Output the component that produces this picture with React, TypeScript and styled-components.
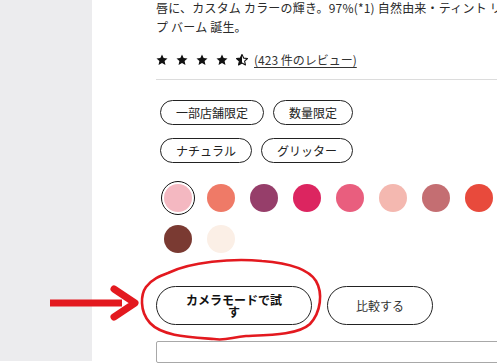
import React from "react";
import styled, { createGlobalStyle } from "styled-components";

const GlobalStyle = createGlobalStyle`
  html, body {
    margin: 0;
    padding: 0;
    background: #fff;
    overflow: hidden;
  }
  body {
    font-family: "Noto Sans CJK JP", "Noto Sans", sans-serif;
    color: #222;
  }
  * { box-sizing: border-box; }
`;

const swatches = [
  "#f4b8c1", "#ef7a67", "#963e6a", "#dc2560",
  "#e95e7e", "#f4b8b0", "#c46e72", "#e84a3c",
  "#7a3a32", "#fbefe6",
];

// star outline used for the rating row
const STAR = "M12 1l3.3 7.2 7.7.8-5.8 5.2 1.7 7.7L12 18l-6.9 3.9 1.7-7.7L1 9l7.7-.8z";

function Star({ half }: { half?: boolean }) {
  return (
    <svg width="12" height="12" viewBox="0 0 24 24">
      {half ? (
        <>
          <defs>
            <clipPath id="leftHalf">
              <rect x="0" y="0" width="12" height="24" />
            </clipPath>
          </defs>
          <path d={STAR} fill="none" stroke="#111" strokeWidth="2.2" strokeLinejoin="round" />
          <path d={STAR} fill="#111" clipPath="url(#leftHalf)" />
        </>
      ) : (
        <path d={STAR} fill="#111" />
      )}
    </svg>
  );
}

export default function App() {
  return (
    <Page>
      <GlobalStyle />
      <Sidebar />
      <Main>
        <Description>
          <span>唇に、カスタム カラーの輝き。97%(*1) 自然由来・ティント リ</span>
          <span>プ バーム 誕生。</span>
        </Description>

        <Rating>
          <Stars>
            <Star />
            <Star />
            <Star />
            <Star />
            <Star half />
          </Stars>
          <ReviewLink href="#">(423 件のレビュー)</ReviewLink>
        </Rating>

        <Divider />

        <TagRow>
          <Tag>一部店舗限定</Tag>
          <Tag>数量限定</Tag>
        </TagRow>
        <TagRow>
          <Tag>ナチュラル</Tag>
          <Tag>グリッター</Tag>
        </TagRow>

        <SwatchGrid>
          {swatches.map((c, i) => (
            <Swatch key={c} $selected={i === 0}>
              <SwatchDot $color={c} />
            </Swatch>
          ))}
        </SwatchGrid>

        <Actions>
          <PillButton $primary>カメラモードで試す</PillButton>
          <PillButton>比較する</PillButton>
        </Actions>

        <FormBox />
      </Main>

      <Annotation viewBox="0 0 497 363" width="497" height="363">
        <g fill="none" stroke="#e3191f" strokeLinecap="round" strokeLinejoin="round">
          <path d="M50 303 L122 303" strokeWidth="7" strokeLinecap="butt" />
          <path d="M114 289 L135 303 L114 317" strokeWidth="7" />
          <path
            d="M168 273 C190 262 232 258 262 261 C288 263 308 268 316 281 C323 293 321 312 310 324 C298 335 270 335 246 336 C232 337 226 341 214 339 C188 337 162 336 150 323 C139 311 141 294 146 287 C152 279 160 276 168 273 Z"
            strokeWidth="2.6"
          />
        </g>
      </Annotation>
    </Page>
  );
}

const Page = styled.div`
  position: relative;
  display: flex;
  width: 497px;
  height: 363px;
  overflow: hidden;
`;

const Sidebar = styled.div`
  flex-shrink: 0;
  width: 92px;
  height: 361px;
  background: #ececee;
`;

const Main = styled.div`
  flex-shrink: 0;
  width: 420px;
  padding-left: 64px;
  display: flex;
  flex-direction: column;
`;

const Description = styled.p`
  margin: -2px 0 0;
  font-size: 12px;
  line-height: 19px;
  letter-spacing: 0.2px;
  color: #2a2a2a;

  span {
    display: block;
    white-space: nowrap;
  }
`;

const Rating = styled.div`
  display: flex;
  align-items: center;
  height: 20px;
  margin-top: 15px;
`;

const Stars = styled.div`
  display: flex;
  gap: 8px;

  svg { display: block; }
`;

const ReviewLink = styled.a`
  margin-left: 6px;
  font-size: 12px;
  color: #333;
  text-decoration: underline;
  text-underline-offset: 2px;
`;

const Divider = styled.hr`
  margin: 11px 0 0;
  border: none;
  border-top: 1px solid #dcdcdc;
`;

const TagRow = styled.div`
  display: flex;
  gap: 9px;
  margin-top: 20px;
  padding-left: 4px;

  & + & {
    margin-top: 13px;
  }
`;

const Tag = styled.span`
  display: inline-flex;
  align-items: center;
  height: 25px;
  padding: 0 15px;
  border: 1px solid #222;
  border-radius: 13px;
  font-size: 12px;
  color: #222;
  white-space: nowrap;
`;

const SwatchGrid = styled.div`
  display: flex;
  flex-wrap: wrap;
  column-gap: 9px;
  row-gap: 7px;
  width: 345px;
  margin-top: 18px;
  padding-left: 5px;
`;

const Swatch = styled.button<{ $selected?: boolean }>`
  width: 34px;
  height: 34px;
  padding: 2px;
  border-radius: 50%;
  border: 1px solid ${({ $selected }) => ($selected ? "#111" : "transparent")};
  background: #fff;
  cursor: pointer;
`;

const SwatchDot = styled.span<{ $color: string }>`
  display: block;
  width: 28px;
  height: 28px;
  border-radius: 50%;
  background: ${({ $color }) => $color};
`;

const Actions = styled.div`
  display: flex;
  gap: 15px;
  margin-top: 30px;
`;

const PillButton = styled.button<{ $primary?: boolean }>`
  width: ${({ $primary }) => ($primary ? "156px" : "106px")};
  height: 39px;
  padding: 0 25px;
  border: 1px solid #222;
  border-radius: 20px;
  background: #fff;
  font-family: "Noto Sans CJK JP", sans-serif;
  font-size: 12px;
  line-height: 12px;
  font-weight: ${({ $primary }) => ($primary ? 700 : 400)};
  color: ${({ $primary }) => ($primary ? "#111" : "#333")};
  cursor: pointer;
`;

const FormBox = styled.div`
  margin-top: 16px;
  height: 60px;
  border: 1px solid #a8a8a8;
  border-radius: 2px;
`;

const Annotation = styled.svg`
  position: absolute;
  left: 0;
  top: 0;
  pointer-events: none;
`;
